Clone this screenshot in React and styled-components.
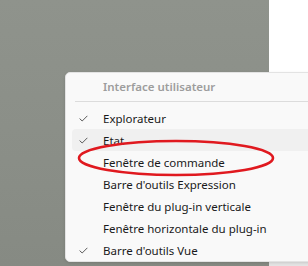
import React from "react";
import styled, { createGlobalStyle } from "styled-components";

const Global = createGlobalStyle`
  html, body { margin: 0; padding: 0; }
  body { width: 308px; height: 266px; overflow: hidden; font-family: "Noto Sans", "Open Sans", sans-serif; }
`;

const Page = styled.div`
  position: relative;
  width: 308px;
  height: 266px;
  display: flex;
  overflow: hidden;
`;

const Canvas = styled.div`
  width: 269px;
  height: 100%;
  background: linear-gradient(180deg, #8f938c 0%, #8a8e87 60%, #868a83 100%);
`;

const Side = styled.div`
  flex: 1;
  display: flex;
  flex-direction: column;
  background: #ffffff;
`;

const SideFill = styled.div`
  flex: 1;
`;

const SideFoot = styled.div`
  height: 4px;
  background: #e4e4e4;
`;

const Menu = styled.div`
  position: absolute;
  left: 65px;
  top: 72px;
  width: 260px;
  height: 190px;
  box-sizing: border-box;
  background: #f9f9f9;
  border: 1px solid #e3e3e3;
  border-radius: 5px;
  box-shadow: 0 1px 3px rgba(0, 0, 0, 0.12);
  padding: 0 0 0 6px;
  display: flex;
  flex-direction: column;
`;

const Header = styled.div`
  height: 27px;
  display: flex;
  align-items: center;
  padding-left: 31px;
  color: #9d9d9d;
  font-size: 11.5px;
  font-weight: 600;
`;

const Separator = styled.div`
  height: 1px;
  background: #dcdcdc;
  margin: 1px 0 5px 3px;
`;

const Item = styled.div`
  height: 22px;
  display: flex;
  align-items: center;
  border-radius: 4px;
  background: ${(p) => (p.$hover ? "#f0f0f0" : "transparent")};
  color: #1a1a1a;
  font-size: 11.5px;
`;

const Check = styled.span`
  width: 31px;
  display: flex;
  justify-content: flex-start;
  padding-left: 7px;
  box-sizing: border-box;
`;

const Highlight = styled.svg`
  position: absolute;
  left: 77px;
  top: 139px;
  overflow: visible;
`;

const CheckIcon = () => (
  <svg width="9" height="7" viewBox="0 0 9 7">
    <path d="M0.6 3.6 L3.2 6 L8.4 0.8" fill="none" stroke="#5a5a5a" strokeWidth="1" />
  </svg>
);

const items = [
  { label: "Explorateur", checked: true },
  { label: "Etat", checked: true, hover: true },
  { label: "Fenêtre de commande" },
  { label: "Barre d'outils Expression" },
  { label: "Fenêtre du plug-in verticale" },
  { label: "Fenêtre horizontale du plug-in" },
  { label: "Barre d'outils Vue", checked: true },
];

export default function App() {
  return (
    <>
      <Global />
      <Page>
        <Canvas />
        <Side>
          <SideFill />
          <SideFoot />
        </Side>
        <Menu>
          <Header>Interface utilisateur</Header>
          <Separator />
          {items.map((it) => (
            <Item key={it.label} $hover={it.hover}>
              <Check>{it.checked && <CheckIcon />}</Check>
              {it.label}
            </Item>
          ))}
        </Menu>
        <Highlight width="198" height="38" viewBox="0 0 198 38">
          <ellipse cx="99" cy="19" rx="97" ry="17" fill="none" stroke="#e0191f" strokeWidth="2.6" />
        </Highlight>
      </Page>
    </>
  );
}
